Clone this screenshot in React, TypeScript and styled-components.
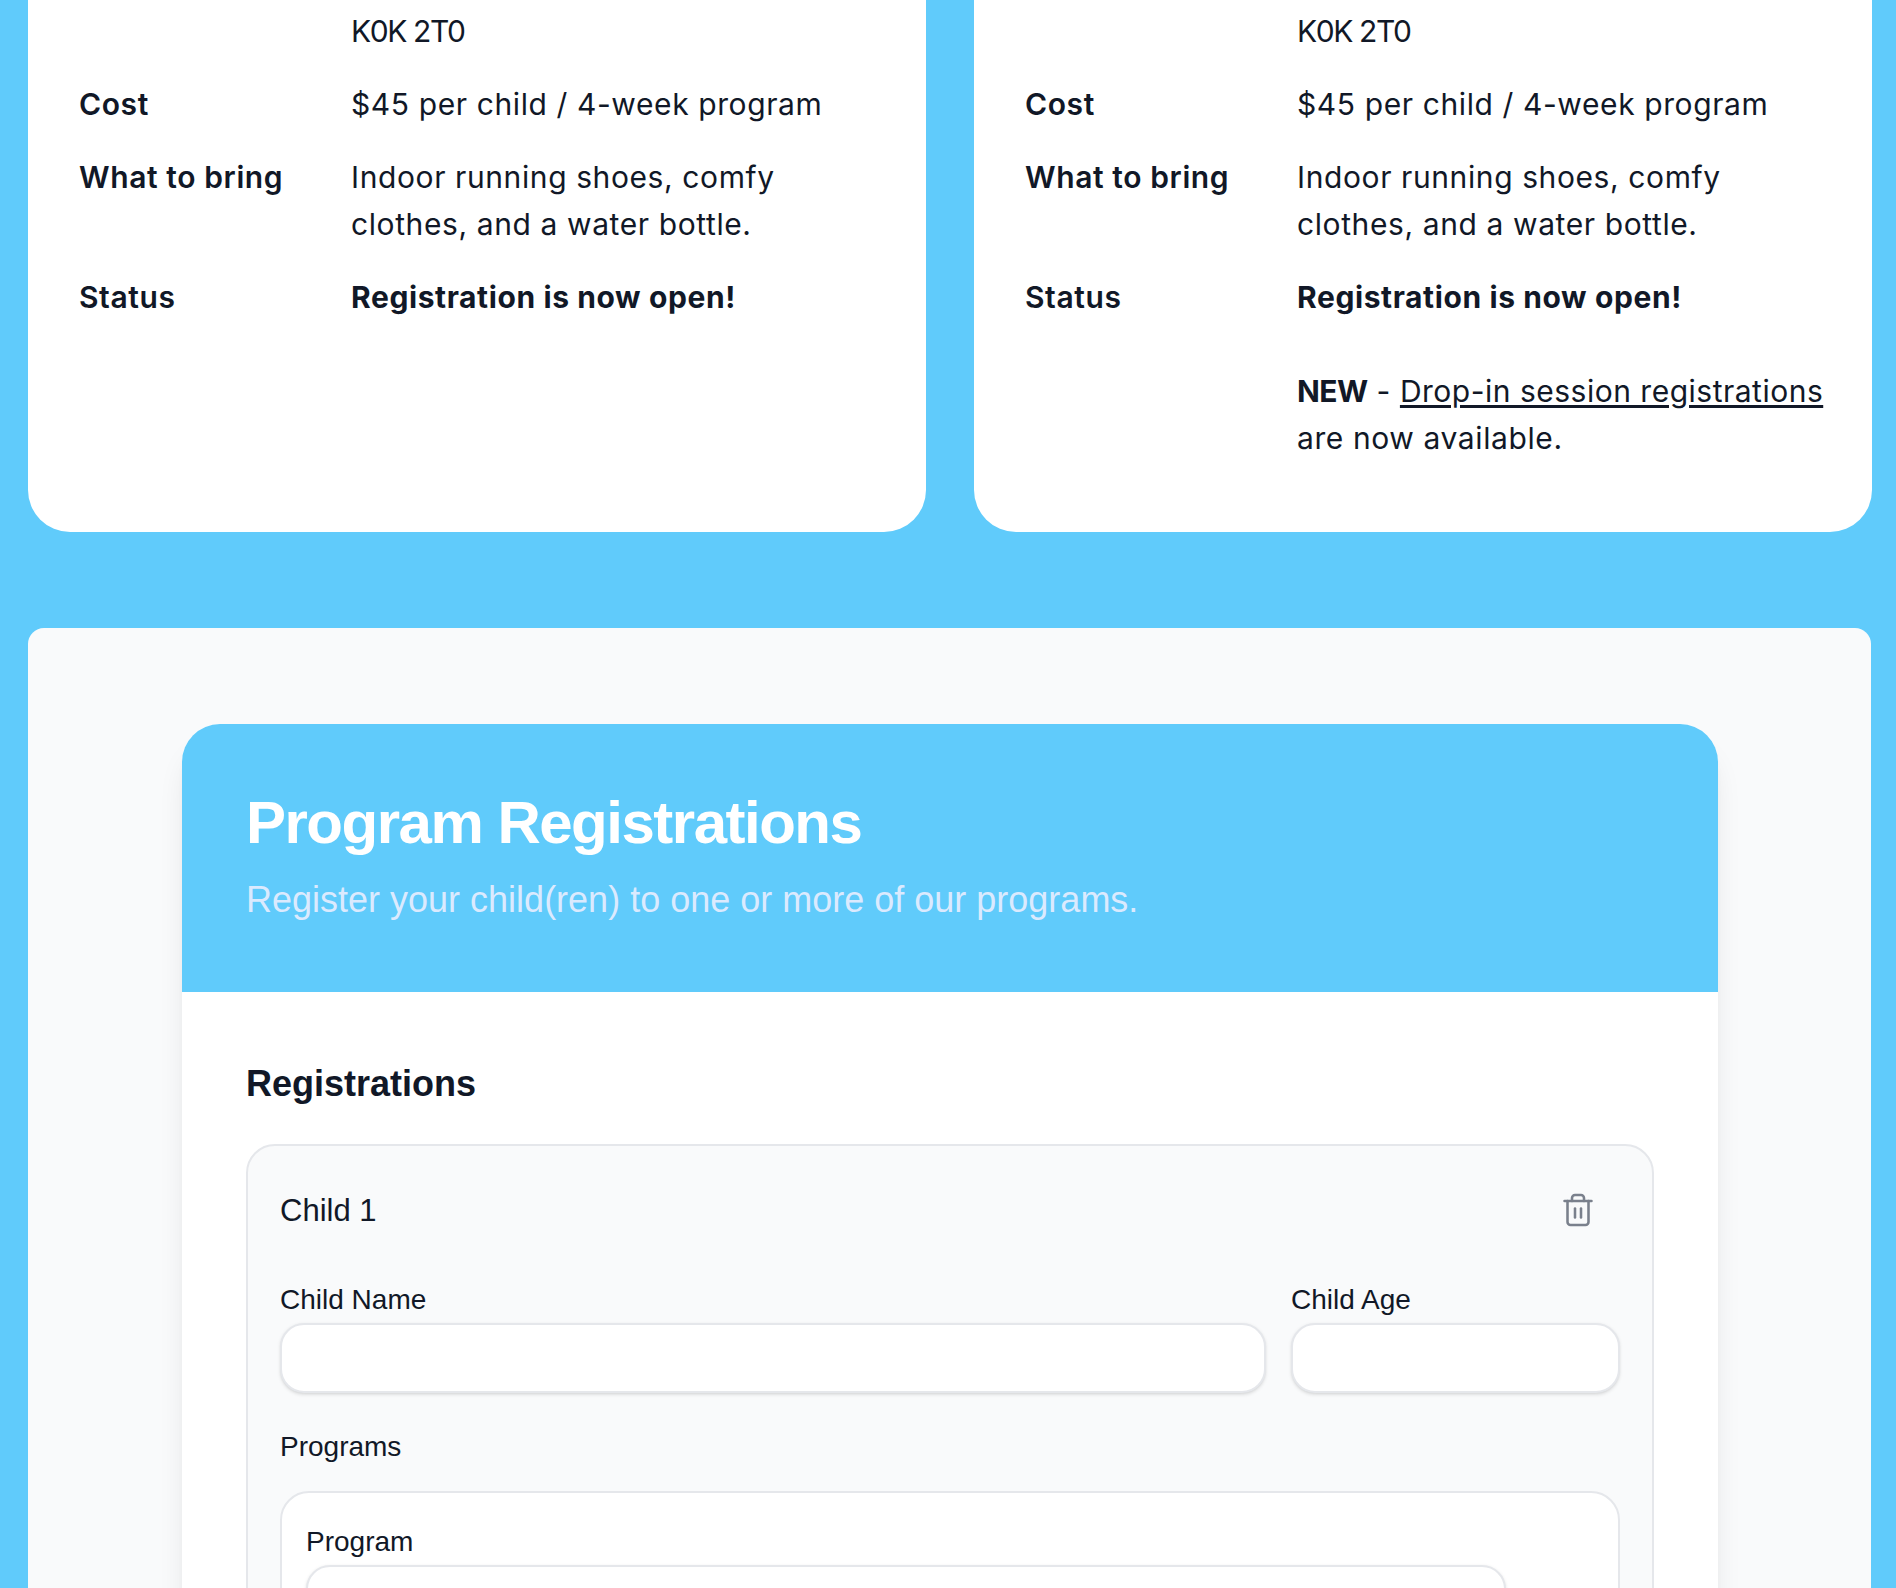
import React from "react";
import styled, { createGlobalStyle } from "styled-components";
import { Trash2 } from "lucide-react";

const GlobalStyle = createGlobalStyle`
  html, body {
    margin: 0;
    height: 1588px;
    overflow: hidden;
    background: #60cbfb;
  }
  * {
    box-sizing: border-box;
  }
`;

const Page = styled.div`
  height: 1588px;
  overflow: hidden;
  padding: 0 24px 0 28px;
  background: #60cbfb;
  color: #111827;
`;

const InfoGrid = styled.div`
  display: grid;
  grid-template-columns: 1fr 1fr;
  gap: 48px;
`;

const InfoCard = styled.section`
  height: 532px;
  padding: 8px 34px 0 51px;
  background: #fff;
  border-radius: 0 0 42px 42px;
`;

const Details = styled.dl`
  display: grid;
  grid-template-columns: 272px 1fr;
  row-gap: 26px;
  margin: 0;
  font-family: Inter, "Noto Sans", sans-serif;
  font-size: 30px;
  line-height: 47px;
  letter-spacing: 0.6px;
`;

const Term = styled.dt`
  font-weight: 600;
`;

const Value = styled.dd`
  margin: 0;
  font-weight: 400;
`;

const PostalCode = styled(Value)`
  letter-spacing: -1.4px;
`;

const Strong = styled.strong`
  font-weight: 700;
`;

const NewTag = styled(Strong)`
  letter-spacing: -0.6px;
`;

const Note = styled.p`
  margin: 47px 0 0;
`;

const Link = styled.a`
  color: inherit;
  text-decoration: underline;
  text-underline-offset: 3px;
  letter-spacing: 0.5px;
`;

const Panel = styled.section`
  margin: 96px 1px 0 0;
  height: 1200px;
  padding: 96px 153px 96px 154px;
  background: #f9fafb;
  border-radius: 16px;
  font-family: "Liberation Sans", Arial, sans-serif;
`;

const FormCard = styled.div`
  background: #fff;
  border-radius: 38px;
  box-shadow: 0 24px 30px -6px rgba(0, 0, 0, 0.1), 0 10px 12px -7px rgba(0, 0, 0, 0.1);
`;

const FormHeader = styled.header`
  height: 268px;
  padding: 65px 64px 0;
  background: #60cbfb;
  border-radius: 38px 38px 0 0;
`;

const Title = styled.h1`
  margin: 0;
  font-size: 60px;
  line-height: 68px;
  font-weight: 700;
  letter-spacing: -1.5px;
  color: #fff;
`;

const Subtitle = styled.p`
  margin: 22px 0 0;
  font-size: 36px;
  line-height: 42px;
  color: #dbeafe;
`;

const FormBody = styled.div`
  padding: 66px 64px 64px;
`;

const SectionTitle = styled.h2`
  margin: 0 0 34px;
  font-size: 36px;
  line-height: 52px;
  font-weight: 700;
`;

const ChildBox = styled.div`
  padding: 33px 32px;
  background: #f9fafb;
  border: 2px solid #e5e7eb;
  border-radius: 29px;
`;

const ChildHeader = styled.div`
  display: flex;
  align-items: center;
  justify-content: space-between;
  height: 64px;
  margin-bottom: 39px;
`;

const ChildTitle = styled.h3`
  margin: 0;
  font-size: 31px;
  font-weight: 400;
`;

const RemoveButton = styled.button`
  display: flex;
  padding: 0;
  margin: 0 24px 2px 0;
  border: 0;
  background: none;
  color: #7a808c;
`;

const FieldRow = styled.div`
  display: grid;
  grid-template-columns: 1fr 329px;
  gap: 25px;
`;

const Field = styled.div`
  display: flex;
  flex-direction: column;
  gap: 5px;
`;

const FieldLabel = styled.label`
  font-size: 28px;
  line-height: 36px;
`;

const TextInput = styled.input`
  display: block;
  width: 100%;
  height: 70px;
  background: #fff;
  border: 2px solid #e5e7eb;
  border-radius: 24px;
  box-shadow: 0 1.2px 3.6px rgba(0, 0, 0, 0.1), 0 1.2px 2.4px -1.2px rgba(0, 0, 0, 0.1);
`;

const GroupLabel = styled.div`
  margin: 37px 0 27px;
  font-size: 28px;
  line-height: 34px;
`;

const ProgramBox = styled.div`
  padding: 31px 112px 33px 24px;
  background: #fff;
  border: 2px solid #e5e7eb;
  border-radius: 29px;
`;

const App = () => {
  const details = (extra?: React.ReactNode) => (
    <Details>
      <Term />
      <PostalCode>K0K 2T0</PostalCode>
      <Term>Cost</Term>
      <Value>$45 per child / 4-week program</Value>
      <Term>What to bring</Term>
      <Value>Indoor running shoes, comfy clothes, and a water bottle.</Value>
      <Term>Status</Term>
      <Value>
        <Strong>Registration is now open!</Strong>
        {extra}
      </Value>
    </Details>
  );

  return (
    <>
      <GlobalStyle />
      <Page>
        <InfoGrid>
          <InfoCard>{details()}</InfoCard>
          <InfoCard>
            {details(
              <Note>
                <NewTag>NEW</NewTag> - <Link href="#">Drop-in session registrations</Link> are now available.
              </Note>
            )}
          </InfoCard>
        </InfoGrid>
        <Panel>
          <FormCard>
            <FormHeader>
              <Title>Program Registrations</Title>
              <Subtitle>Register your child(ren) to one or more of our programs.</Subtitle>
            </FormHeader>
            <FormBody>
              <SectionTitle>Registrations</SectionTitle>
              <ChildBox>
                <ChildHeader>
                  <ChildTitle>Child 1</ChildTitle>
                  <RemoveButton type="button" aria-label="Remove child">
                    <Trash2 size={36} strokeWidth={1.7} />
                  </RemoveButton>
                </ChildHeader>
                <FieldRow>
                  <Field>
                    <FieldLabel htmlFor="child-name">Child Name</FieldLabel>
                    <TextInput id="child-name" type="text" />
                  </Field>
                  <Field>
                    <FieldLabel htmlFor="child-age">Child Age</FieldLabel>
                    <TextInput id="child-age" type="text" />
                  </Field>
                </FieldRow>
                <GroupLabel>Programs</GroupLabel>
                <ProgramBox>
                  <Field>
                    <FieldLabel htmlFor="program">Program</FieldLabel>
                    <TextInput id="program" type="text" />
                  </Field>
                </ProgramBox>
              </ChildBox>
            </FormBody>
          </FormCard>
        </Panel>
      </Page>
    </>
  );
};

export default App;
